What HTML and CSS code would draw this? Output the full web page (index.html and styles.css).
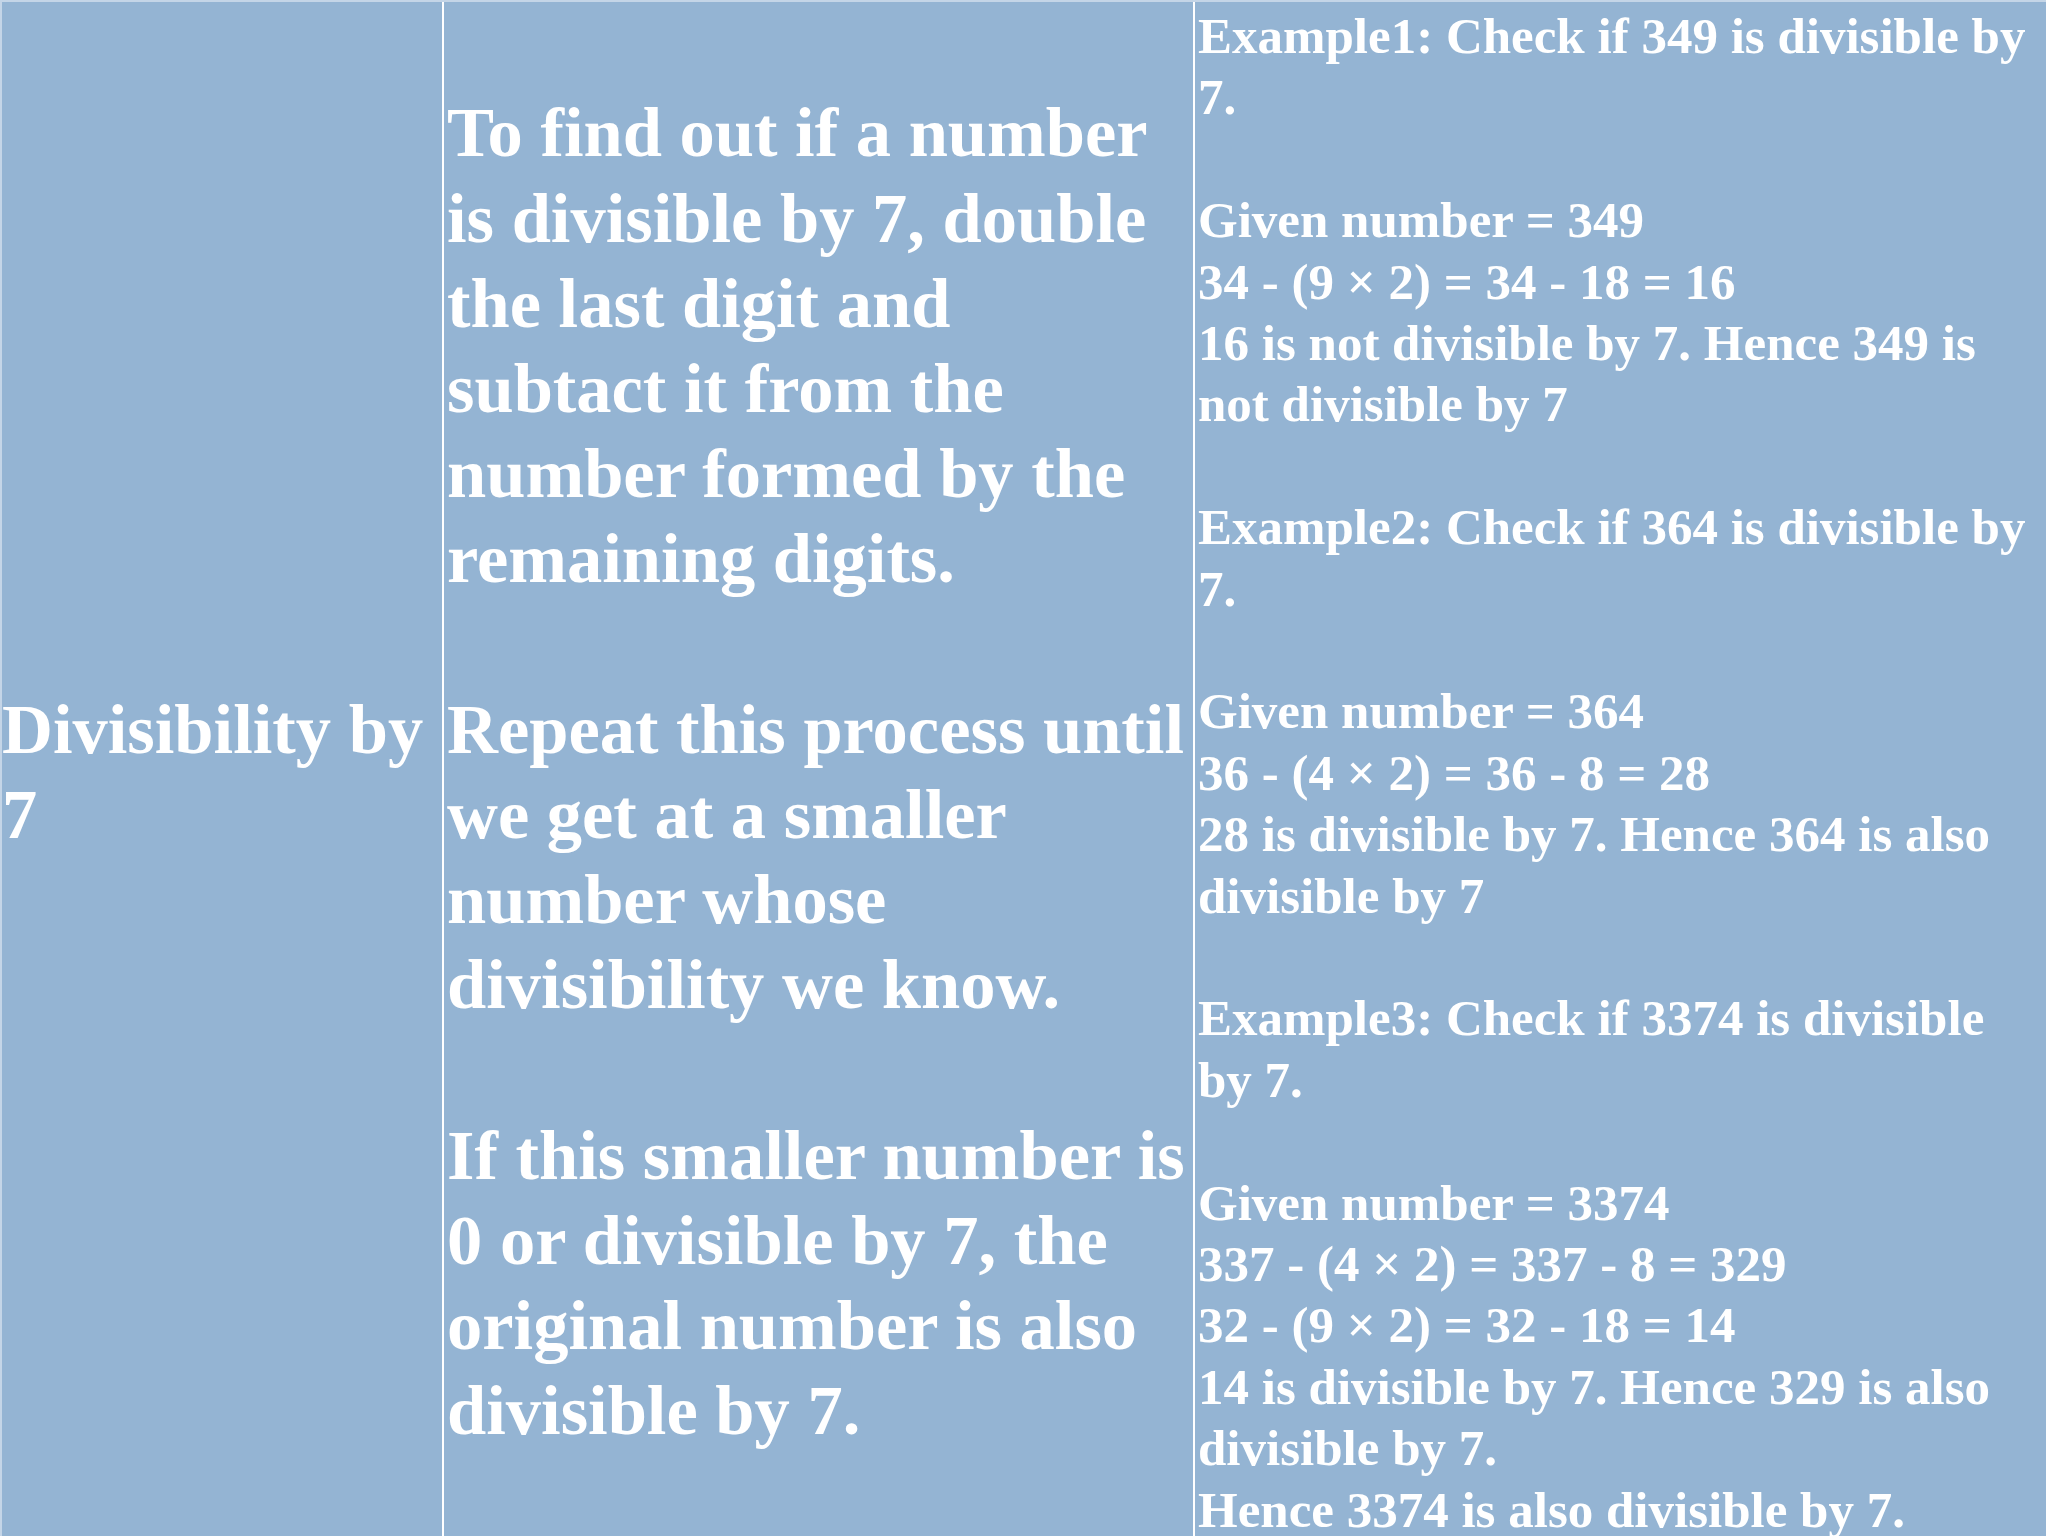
FILE: index.html
```html
<!DOCTYPE html>
<html lang="en">
<head>
<meta charset="utf-8">
<title>Divisibility by 7</title>
<link rel="stylesheet" href="styles.css">
</head>
<body>
<div class="table">
  <div class="cell cell-name">
    <div class="big">
      <p class="para">Divisibility by<br>7</p>
    </div>
  </div>
  <div class="cell cell-rule">
    <div class="big">
      <p class="para gap-big">To find out if a number<br>is divisible by 7, double<br>the last digit and<br>subtact it from the<br>number formed by the<br>remaining digits.</p>
      <p class="para gap-big">Repeat this process until<br>we get at a smaller<br>number whose<br>divisibility we know.</p>
      <p class="para">If this smaller number is<br>0 or divisible by 7, the<br>original number is also<br>divisible by 7.</p>
    </div>
  </div>
  <div class="cell cell-examples">
    <div class="small">
      <p class="para gap-small">Example1: Check if 349 is divisible by<br>7.</p>
      <p class="para gap-small">Given number = 349<br>34 - (9 × 2) = 34 - 18 = 16<br>16 is not divisible by 7. Hence 349 is<br>not divisible by 7</p>
      <p class="para gap-small">Example2: Check if 364 is divisible by<br>7.</p>
      <p class="para gap-small">Given number = 364<br>36 - (4 × 2) = 36 - 8 = 28<br>28 is divisible by 7. Hence 364 is also<br>divisible by 7</p>
      <p class="para gap-small">Example3: Check if 3374 is divisible<br>by 7.</p>
      <p class="para">Given number = 3374<br>337 - (4 × 2) = 337 - 8 = 329<br>32 - (9 × 2) = 32 - 18 = 14<br>14 is divisible by 7. Hence 329 is also<br>divisible by 7.<br>Hence 3374 is also divisible by 7.</p>
    </div>
  </div>
</div>
</body>
</html>
```

FILE: styles.css
```css
html, body {
  margin: 0;
  padding: 0;
  background: #ffffff;
}

body {
  width: 2048px;
  height: 1536px;
  overflow: hidden;
  font-family: "Liberation Serif", "Times New Roman", serif;
  font-weight: bold;
  color: #ffffff;
}

.table {
  box-sizing: border-box;
  width: 2046px;
  height: 1536px;
  display: grid;
  grid-template-columns: 440px 749px 851px;
  column-gap: 2px;
  background: #ffffff;
  border-top: 2px solid #c4d5e7;
  border-left: 2px solid #c4d5e7;
  overflow: hidden;
}

.cell {
  box-sizing: border-box;
  background: #94b4d3;
  overflow: hidden;
  display: flex;
  flex-direction: column;
}

.cell-name,
.cell-rule {
  justify-content: center;
  padding: 6px 0 0 0;
}

.cell-rule {
  padding-left: 3px;
}

.cell-examples {
  justify-content: flex-start;
  padding: 4px 0 0 3px;
}

.para {
  margin: 0;
  white-space: nowrap;
}

.big {
  font-size: 70.5px;
  line-height: 85.2px;
}

.small {
  font-size: 51px;
  line-height: 61.4px;
}

.gap-big {
  margin-bottom: 85.2px;
}

.gap-small {
  margin-bottom: 61.4px;
}
```
